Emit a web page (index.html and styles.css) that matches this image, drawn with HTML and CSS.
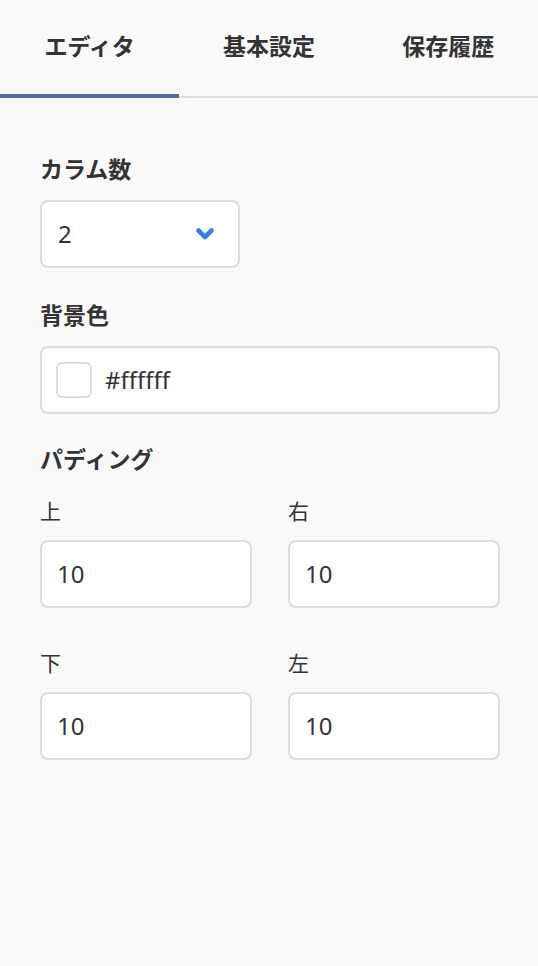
FILE: index.html
```html
<!DOCTYPE html>
<html lang="ja">
<head>
<meta charset="utf-8">
<title>エディタ</title>
<link rel="stylesheet" href="styles.css">
</head>
<body>
<nav class="tabs">
  <div class="tab active">エディタ</div>
  <div class="tab">基本設定</div>
  <div class="tab">保存履歴</div>
</nav>
<main class="panel">
  <section class="group">
    <div class="label">カラム数</div>
    <div class="select">
      <span class="value">2</span>
      <svg class="chev" width="18" height="12" viewBox="0 0 18 12"><path d="M2.5 2.5 L9 9 L15.5 2.5" fill="none" stroke="#3f7fe2" stroke-width="4.6" stroke-linecap="round" stroke-linejoin="round"/></svg>
    </div>
  </section>
  <section class="group">
    <div class="label">背景色</div>
    <div class="color-field">
      <span class="swatch"></span>
      <span class="value">#ffffff</span>
    </div>
  </section>
  <section class="group">
    <div class="label pad-label">パディング</div>
    <div class="pad-grid">
      <div class="pad">
        <div class="sublabel">上</div>
        <div class="input"><span class="value">10</span></div>
      </div>
      <div class="pad">
        <div class="sublabel">右</div>
        <div class="input"><span class="value">10</span></div>
      </div>
      <div class="pad">
        <div class="sublabel">下</div>
        <div class="input"><span class="value">10</span></div>
      </div>
      <div class="pad">
        <div class="sublabel">左</div>
        <div class="input"><span class="value">10</span></div>
      </div>
    </div>
  </section>
</main>
</body>
</html>
```
FILE: styles.css
```css
html, body {
  margin: 0;
  padding: 0;
  background: #f9f9f9;
}
body {
  font-family: "Noto Sans", "Noto Sans CJK JP", sans-serif;
  color: #333;
  width: 538px;
  min-height: 966px;
}
.tabs {
  display: flex;
  border-bottom: 2px solid #dddddd;
  height: 96px;
}
.tab {
  flex: 1;
  box-sizing: border-box;
  height: 98px;
  margin-bottom: -2px;
  border-bottom: 4px solid transparent;
  display: flex;
  align-items: center;
  justify-content: center;
  font-size: 23px;
  font-weight: 700;
  color: #333;
  padding-bottom: 4px;
}
.tab.active {
  border-bottom-color: #4a6f9c;
}
.panel {
  padding: 56px 38px 0 40px;
}
.group {
  margin-bottom: 32px;
}
.group:nth-child(2) {
  margin-bottom: 30px;
}
.label {
  font-size: 23px;
  font-weight: 700;
  line-height: 30px;
  margin-bottom: 16px;
}
.label.pad-label {
  margin-bottom: 22px;
}
.select, .color-field, .input {
  box-sizing: border-box;
  height: 68px;
  background: #fff;
  border: 2px solid #dcdcdc;
  border-radius: 8px;
  display: flex;
  align-items: center;
}
.value {
  font-size: 24px;
  line-height: 30px;
}
.select {
  width: 200px;
  padding: 0 24px 0 16px;
  justify-content: space-between;
}
.chev {
  display: block;
}
.color-field {
  width: 460px;
  padding-left: 14px;
}
.swatch {
  box-sizing: border-box;
  width: 36px;
  height: 36px;
  border: 2px solid #dcdcdc;
  border-radius: 6px;
  background: #fff;
  margin-right: 13px;
}
.input {
  padding-left: 15px;
}
.pad-grid {
  display: grid;
  grid-template-columns: 212px 212px;
  column-gap: 36px;
  row-gap: 40px;
}
.sublabel {
  font-size: 21px;
  line-height: 30px;
  margin-bottom: 14px;
}
```
